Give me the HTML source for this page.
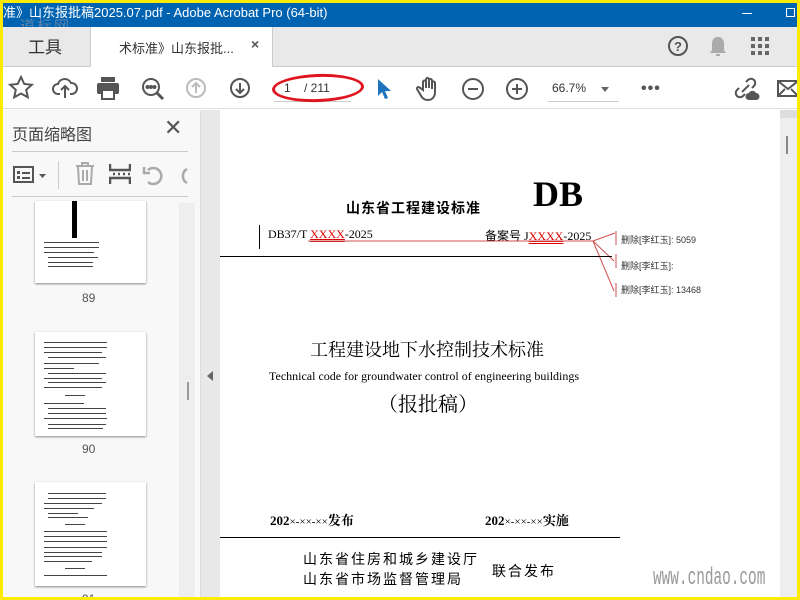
<!DOCTYPE html>
<html><head><meta charset="utf-8"><style>
*{margin:0;padding:0;box-sizing:border-box}
body{width:800px;height:600px;overflow:hidden;background:#ffea00;font-family:"Liberation Sans","Noto Sans CJK SC",sans-serif;position:relative}
.abs{position:absolute}
.ic{position:absolute;stroke:#555;fill:none;stroke-width:2}
.cj{font-family:"Liberation Serif","Noto Serif CJK SC",serif}
.thumb{position:absolute;left:32px;width:111px;background:#fff;box-shadow:0 1px 2px #888}
.ln{position:absolute;height:1px;background:#444}
</style></head><body>
<div class="abs" style="left:3px;top:3px;width:794px;height:594px;background:#fff;overflow:hidden">
<div class="abs" style="left:0;top:0;width:794px;height:24px;background:#0063b1;color:#fff;font-size:13px;line-height:20px;padding-left:0">准》山东报批稿2025.07.pdf - Adobe Acrobat Pro (64-bit)</div>
<div class="abs" style="left:17px;top:12px;font-size:15px;color:#99a;opacity:.6;letter-spacing:2px" >道标网</div>
<div class="abs" style="left:739px;top:10px;width:10px;height:1px;background:#fff"></div>
<div class="abs" style="left:783px;top:5px;width:9px;height:9px;border:1px solid #fff"></div>
<div class="abs" style="left:0;top:24px;width:794px;height:40px;background:#e9e9e9;border-bottom:1px solid #ccc"></div>
<div class="abs" style="left:25px;top:30px;font-size:17px;color:#333">工具</div>
<div class="abs" style="left:87px;top:24px;width:183px;height:40px;background:#fff;border-left:1px solid #ccc;border-right:1px solid #ccc"></div>
<div class="abs" style="left:116px;top:35px;font-size:13px;color:#333">术标准》山东报批...</div>
<div class="abs" style="left:248px;top:33px;font-size:14px;color:#555;font-weight:bold">×</div>
<svg class="ic" style="left:664px;top:32px" width="22" height="22"><circle cx="11" cy="11" r="9"/><text x="11" y="16" font-size="13" text-anchor="middle" fill="#555" stroke="none" font-weight="bold" font-family="Liberation Sans">?</text></svg>
<svg class="abs" style="left:706px;top:32px" width="18" height="22"><path d="M9 2c-4 0-6 3-6 7v6l-2 3h16l-2-3V9c0-4-2-7-6-7z M7 19h4v2H7z" fill="#aaa"/></svg>
<svg class="abs" style="left:748px;top:34px" width="20" height="20" fill="#666"><rect x="0" y="0" width="4" height="4"/><rect x="7" y="0" width="4" height="4"/><rect x="14" y="0" width="4" height="4"/><rect x="0" y="7" width="4" height="4"/><rect x="7" y="7" width="4" height="4"/><rect x="14" y="7" width="4" height="4"/><rect x="0" y="14" width="4" height="4"/><rect x="7" y="14" width="4" height="4"/><rect x="14" y="14" width="4" height="4"/></svg>
<div class="abs" style="left:0;top:64px;width:794px;height:42px;background:#fff;border-bottom:1px solid #ddd"></div>
<svg class="ic" style="left:5px;top:72px" width="26" height="26"><path d="M13 2l3.3 7 7.5.8-5.6 5 1.6 7.5L13 18.5 6.2 22.3l1.6-7.5-5.6-5 7.5-.8z"/></svg>
<svg class="ic" style="left:49px;top:73px" width="26" height="24"><path d="M8 18H6a5 5 0 010-10 7 7 0 0113-1 5 5 0 011 11h-2M13 22V11M9 14l4-4 4 4"/></svg>
<svg class="abs" style="left:93px;top:73px" width="24" height="24" fill="#555"><rect x="5" y="1" width="14" height="5"/><rect x="1" y="7" width="22" height="11" rx="2"/><rect x="6" y="14" width="12" height="9" fill="#fff" stroke="#555" stroke-width="2"/></svg>
<svg class="ic" style="left:137px;top:73px" width="26" height="26"><circle cx="11" cy="11" r="8"/><path d="M17 17l6 6" stroke-width="3"/><circle cx="7.5" cy="11" r="1" fill="#555"/><circle cx="11" cy="11" r="1" fill="#555"/><circle cx="14.5" cy="11" r="1" fill="#555"/></svg>
<svg class="ic" style="left:182px;top:74px;stroke:#bbb" width="22" height="22"><circle cx="11" cy="11" r="9"/><path d="M11 16V6M7 10l4-4 4 4"/></svg>
<svg class="ic" style="left:226px;top:74px" width="22" height="22"><circle cx="11" cy="11" r="9"/><path d="M11 6v10M7 12l4 4 4-4"/></svg>
<div class="abs" style="left:271px;top:73px;width:77px;height:26px;border-bottom:1px solid #ccc"></div>
<div class="abs" style="left:281px;top:78px;font-size:12px;color:#333">1&nbsp;&nbsp;&nbsp;&nbsp;/ 211</div>
<div class="abs" style="left:269px;top:71px;width:92px;height:28px;border:3px solid #e0141e;border-radius:50%;transform:rotate(-2deg)"></div>
<svg class="abs" style="left:372px;top:75px" width="16" height="22"><path d="M3 1v17l4-4 3 7 3-1-3-7h6z" fill="#1e73be"/></svg>
<svg class="ic" style="left:413px;top:73px" width="24" height="26"><path d="M7 14V6a1.5 1.5 0 013 0v6V3.5a1.5 1.5 0 013 0V12V4.5a1.5 1.5 0 013 0V13V7a1.5 1.5 0 013 0v9c0 5-3 8-7 8s-6-2-8-6l-3-5a1.5 1.5 0 012.5-1.5z"/></svg>
<svg class="ic" style="left:458px;top:74px" width="24" height="24"><circle cx="12" cy="12" r="10"/><path d="M7 12h10"/></svg>
<svg class="ic" style="left:502px;top:74px" width="24" height="24"><circle cx="12" cy="12" r="10"/><path d="M7 12h10M12 7v10"/></svg>
<div class="abs" style="left:545px;top:73px;width:71px;height:26px;border-bottom:1px solid #ccc"></div>
<div class="abs" style="left:549px;top:78px;font-size:12px;color:#333">66.7%</div>
<div class="abs" style="left:598px;top:84px;border:4px solid transparent;border-top:5px solid #666"></div>
<div class="abs" style="left:638px;top:77px;font-size:16px;color:#555;letter-spacing:1px;font-weight:bold">•••</div>
<svg class="ic" style="left:730px;top:73px" width="28" height="26"><path d="M9 16l7-7M6 12l-2 2a4 4 0 006 6l2-2M19 12l2-2a4 4 0 00-6-6l-2 2"/><path d="M16 24a3.5 3.5 0 010-7 4 4 0 017 0 3.5 3.5 0 010 7z" fill="#555" stroke="none"/></svg>
<svg class="ic" style="left:774px;top:77px" width="20" height="18"><rect x="1" y="1" width="20" height="15"/><path d="M1 1l10 8 10-8M1 16l7-7M21 16l-7-7"/></svg>
<div class="abs" style="left:0;top:107px;width:197px;height:487px;background:#f8f8f8"></div>
<div class="abs" style="left:9px;top:118px;font-size:16px;color:#444">页面缩略图</div>
<div class="abs" style="left:161px;top:114px;font-size:22px;color:#555;line-height:22px">✕</div>
<div class="abs" style="left:9px;top:148px;width:176px;height:1px;background:#ccc"></div>
<div class="abs" style="left:9px;top:193px;width:176px;height:1px;background:#ccc"></div>
<svg class="abs" style="left:10px;top:162px" width="36" height="20"><rect x="1" y="2" width="19" height="15" fill="none" stroke="#555" stroke-width="2"/><rect x="4" y="6" width="3" height="3" fill="#555"/><rect x="4" y="11" width="3" height="3" fill="#555"/><rect x="9" y="7" width="8" height="2" fill="#555"/><rect x="9" y="12" width="8" height="2" fill="#555"/><path d="M26 9h7l-3.5 4z" fill="#555"/></svg>
<div class="abs" style="left:55px;top:158px;width:1px;height:28px;background:#ccc"></div>
<svg class="ic" style="left:72px;top:159px;stroke:#aaa" width="20" height="24"><path d="M1 4h18M7 4V1h6v3M3 4l1 18h12l1-18M8 8v11M12 8v11"/></svg>
<svg class="ic" style="left:106px;top:160px" width="22" height="22"><path d="M1 1v6h20V1M1 21v-6h20v6M4 11h2M9 11h2M14 11h2M19 11h2" stroke-width="2.5"/></svg>
<svg class="ic" style="left:139px;top:161px;stroke:#aaa" width="22" height="22"><path d="M6 18a8 8 0 100-12M2 3v6h6" stroke-width="2.5"/></svg>
<svg class="ic" style="left:172px;top:161px;stroke:#aaa" width="14" height="22"><path d="M12 5a8 8 0 000 14" stroke-width="2.5"/></svg>
<div class="abs" style="left:176px;top:200px;width:16px;height:394px;background:#eee"></div>
<div class="abs" style="left:184px;top:379px;width:2px;height:18px;background:#999"></div>
<div class="thumb" style="top:198px;height:82px"><div class="abs" style="left:37px;top:0;width:5px;height:37px;background:#000"></div><div class="ln" style="left:9px;top:41px;width:55px"></div><div class="ln" style="left:9px;top:46px;width:55px"></div><div class="ln" style="left:9px;top:51px;width:50px"></div><div class="ln" style="left:13px;top:56px;width:50px"></div><div class="ln" style="left:13px;top:61px;width:45px"></div><div class="ln" style="left:13px;top:65px;width:45px"></div></div>
<div class="abs" style="left:79px;top:288px;font-size:12px;color:#555">89</div>
<div class="thumb" style="top:329px;height:104px"><div class="ln" style="left:9px;top:10px;width:63px"></div><div class="ln" style="left:9px;top:15px;width:63px"></div><div class="ln" style="left:9px;top:20px;width:58px"></div><div class="ln" style="left:13px;top:25px;width:58px"></div><div class="ln" style="left:9px;top:31px;width:55px"></div><div class="ln" style="left:9px;top:36px;width:30px"></div><div class="ln" style="left:13px;top:41px;width:58px"></div><div class="ln" style="left:9px;top:46px;width:58px"></div><div class="ln" style="left:13px;top:50px;width:58px"></div><div class="ln" style="left:9px;top:55px;width:58px"></div><div class="ln" style="left:30px;top:63px;width:20px"></div><div class="ln" style="left:9px;top:71px;width:40px"></div><div class="ln" style="left:13px;top:76px;width:58px"></div><div class="ln" style="left:13px;top:81px;width:58px"></div><div class="ln" style="left:9px;top:86px;width:63px"></div><div class="ln" style="left:13px;top:92px;width:58px"></div><div class="ln" style="left:13px;top:96px;width:55px"></div></div>
<div class="abs" style="left:79px;top:439px;font-size:12px;color:#555">90</div>
<div class="thumb" style="top:479px;height:104px"><div class="ln" style="left:13px;top:11px;width:58px"></div><div class="ln" style="left:13px;top:16px;width:58px"></div><div class="ln" style="left:9px;top:21px;width:58px"></div><div class="ln" style="left:9px;top:26px;width:50px"></div><div class="ln" style="left:13px;top:31px;width:30px"></div><div class="ln" style="left:13px;top:35px;width:40px"></div><div class="ln" style="left:30px;top:42px;width:20px"></div><div class="ln" style="left:9px;top:49px;width:63px"></div><div class="ln" style="left:9px;top:54px;width:63px"></div><div class="ln" style="left:9px;top:59px;width:63px"></div><div class="ln" style="left:9px;top:65px;width:63px"></div><div class="ln" style="left:9px;top:70px;width:58px"></div><div class="ln" style="left:9px;top:74px;width:58px"></div><div class="ln" style="left:9px;top:79px;width:48px"></div><div class="ln" style="left:30px;top:86px;width:20px"></div><div class="ln" style="left:9px;top:93px;width:63px"></div></div>
<div class="abs" style="left:79px;top:589px;font-size:12px;color:#555">91</div>
<div class="abs" style="left:197px;top:107px;width:20px;height:487px;background:#e8e8e8;border-left:1px solid #ddd"></div>
<div class="abs" style="left:204px;top:368px;border:5px solid transparent;border-right:6px solid #666;border-left:0"></div>
<div class="abs" style="left:217px;top:107px;width:560px;height:487px;background:#fff"></div>
<div class="abs" style="left:777px;top:107px;width:17px;height:487px;background:#eee"></div>
<div class="abs" style="left:777px;top:107px;width:17px;height:8px;background:#ddd"></div>
<div class="abs" style="left:783px;top:133px;width:2px;height:18px;background:#888"></div>
<div class="abs cj" style="left:343px;top:195px;font-size:14px;font-weight:bold;letter-spacing:1px;font-family:'Noto Sans CJK SC',sans-serif">山东省工程建设标准</div>
<div class="abs cj" style="left:530px;top:170px;font-size:36px;font-weight:bold">DB</div>
<div class="abs" style="left:256px;top:222px;width:1px;height:24px;background:#000"></div>
<div class="abs cj" style="left:265px;top:224px;font-size:12px">DB37/T <span style="color:#d00;text-decoration:underline double">XXXX</span>-2025</div>
<div class="abs cj" style="left:482px;top:224px;font-size:12px"><span style="font-family:'Noto Sans CJK SC'">备案号</span> J<span style="color:#d00;text-decoration:underline double">XXXX</span>-2025</div>
<svg class="abs" style="left:300px;top:224px" width="380" height="80" fill="none" stroke="#d05050" stroke-width="1"><path d="M5 14H290l22-8M290 14l21 20M290 14l21 50"/><path d="M313 4v14M313 27v14M313 56v14"/></svg>
<div class="abs" style="left:618px;top:230px;font-size:9px;color:#333">删除[李红玉]:&nbsp;5059</div>
<div class="abs" style="left:618px;top:256px;font-size:9px;color:#333">删除[李红玉]:</div>
<div class="abs" style="left:618px;top:280px;font-size:9px;color:#333">删除[李红玉]:&nbsp;13468</div>
<div class="abs" style="left:217px;top:253px;width:392px;height:1px;background:#000"></div>
<div class="abs cj" style="left:307px;top:333px;font-size:18px">工程建设地下水控制技术标准</div>
<div class="abs cj" style="left:266px;top:366px;font-size:12px">Technical code for groundwater control of engineering buildings</div>
<div class="abs cj" style="left:375px;top:385px;font-size:20px">（报批稿）</div>
<div class="abs cj" style="left:267px;top:507px;font-size:13px;font-weight:bold">202<span style="font-weight:normal;font-size:11px">×-××-××</span>发布</div>
<div class="abs cj" style="left:482px;top:507px;font-size:13px;font-weight:bold">202<span style="font-weight:normal;font-size:11px">×-××-××</span>实施</div>
<div class="abs" style="left:217px;top:534px;width:400px;height:1px;background:#000"></div>
<div class="abs" style="left:300px;top:546px;font-size:14px;letter-spacing:2px;font-family:'Noto Sans CJK SC',sans-serif;line-height:20px">山东省住房和城乡建设厅<br>山东省市场监督管理局</div>
<div class="abs" style="left:489px;top:558px;font-size:14px;letter-spacing:2px;font-family:'Noto Sans CJK SC',sans-serif">联合发布</div>
<div class="abs" style="left:650px;top:562px;font-size:24px;color:#999;font-family:'Liberation Mono',monospace;transform:scaleX(.6);transform-origin:left">www.cndao.com</div>
</div>
</body></html>
